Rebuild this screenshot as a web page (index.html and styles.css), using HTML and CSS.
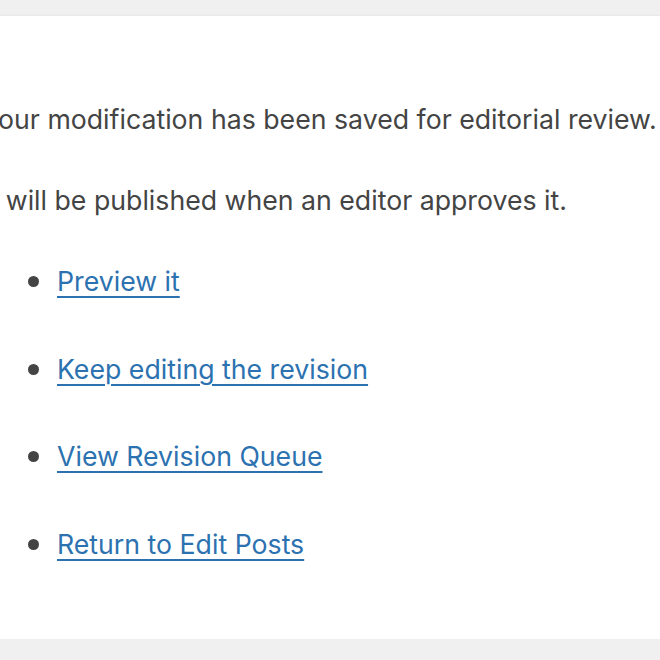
FILE: index.html
```html
<!DOCTYPE html>
<html>
<head>
    <title>Revision saved</title>
    <link rel="stylesheet" href="styles.css">
</head>
<body>
    <div class="wrap">
        <div class="notice">
            <p>Your modification has been saved for editorial review.</p>
            <p>It will be published when an editor approves it.</p>
            <ul class="actions">
                <li><a href="#">Preview it</a></li>
                <li><a href="#">Keep editing the revision</a></li>
                <li><a href="#">View Revision Queue</a></li>
                <li><a href="#">Return to Edit Posts</a></li>
            </ul>
        </div>
    </div>
</body>
</html>
```

FILE: styles.css
```css
html, body {
    margin: 0;
    padding: 0;
    background: #f0f0f0;
    overflow: hidden;
}
body {
    font-family: Inter, "Liberation Sans", sans-serif;
    font-size: 26.7px;
    line-height: 39px;
    color: #444;
}
.wrap {
    padding-top: 16px;
    margin-left: -40px;
    margin-right: -40px;
}
.notice {
    background: #fff;
    box-shadow: 0 1px 3px rgba(0, 0, 0, 0.15);
    height: 623px;
    padding: 84px 24px 0 22px;
    box-sizing: border-box;
}
.notice p {
    margin: 0 0 42px 0;
}
.actions {
    list-style: none;
    margin: 37px 0 0 0;
    padding-left: 46px;
}
.actions li {
    display: flex;
    align-items: center;
    gap: 18px;
    margin-bottom: 48.5px;
}
.actions li::before {
    content: "";
    width: 11px;
    height: 11px;
    border-radius: 50%;
    background: #444;
}
.actions a {
    color: #2c72b0;
    text-decoration: underline;
    text-underline-offset: 5px;
    text-decoration-thickness: 2px;
}
```
